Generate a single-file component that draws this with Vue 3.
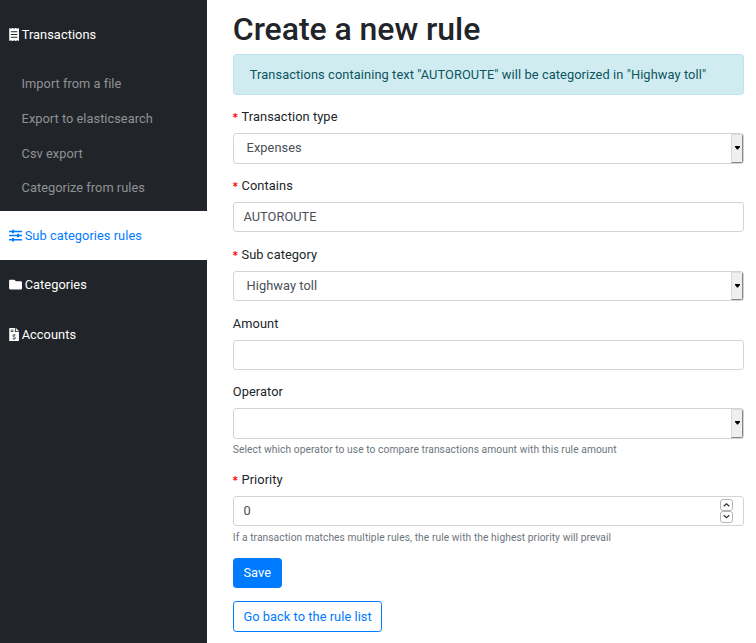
<script setup>
import { ref, computed } from 'vue'

const imports = ['Import from a file', 'Export to elasticsearch', 'Csv export', 'Categorize from rules']
const text = ref('AUTOROUTE')
const subCategory = ref('Highway toll')
const summary = computed(
  () => `Transactions containing text "${text.value}" will be categorized in "${subCategory.value}"`
)
const fields = computed(() => [
  { label: 'Transaction type', required: true, kind: 'select', value: 'Expenses' },
  { label: 'Contains', required: true, kind: 'text', value: text.value },
  { label: 'Sub category', required: true, kind: 'select', value: subCategory.value },
  { label: 'Amount', kind: 'text', value: '' },
  {
    label: 'Operator',
    kind: 'select',
    value: '',
    help: 'Select which operator to use to compare transactions amount with this rule amount',
  },
  {
    label: 'Priority',
    required: true,
    kind: 'number',
    value: '0',
    help: 'If a transaction matches multiple rules, the rule with the highest priority will prevail',
  },
])
</script>

<template>
  <div class="page">
    <nav class="sidebar">
      <a class="item">
        <svg class="icon narrow" viewBox="0 0 384 512">
          <path fill="currentColor" fill-rule="evenodd" d="M358 6 320 32 265 3q-9-6-18 0L192 32 137 3q-9-6-18 0L64 32 26 6Q0-6 0 16v480q0 22 26 10l38-26 55 29q9 6 18 0l55-29 55 29q9 6 18 0l55-29 38 26q26 12 26-10V16q0-22-26-10zM64 128h256v36H64zm0 110h256v36H64zm0 110h256v36H64z" />
        </svg>
        <span>Transactions</span>
      </a>
      <div class="sub">
        <a v-for="name in imports" :key="name" class="sub-item">{{ name }}</a>
      </div>
      <a class="item active">
        <svg class="icon wide" viewBox="0 0 13 13">
          <path fill="currentColor" d="M0 1.7h3v-1h2v1h8v1.5H5v1H3v-1H0zM0 5.8h8v-1h2v1h3v1.5h-3v1H8v-1H0zM0 9.9h3v-1h2v1h8v1.5H5v1H3v-1H0z" />
        </svg>
        <span>Sub categories rules</span>
      </a>
      <a class="item">
        <svg class="icon wide" viewBox="0 0 512 512">
          <path fill="currentColor" d="M464 128H272l-64-64H48C21 64 0 85 0 112v288c0 27 21 48 48 48h416c27 0 48-21 48-48V176c0-27-21-48-48-48z" />
        </svg>
        <span>Categories</span>
      </a>
      <a class="item">
        <svg class="icon narrow" viewBox="0 0 384 512">
          <path fill="currentColor" fill-rule="evenodd" d="M24 0h200v136q0 24 24 24h136v328q0 24-24 24H24q-24 0-24-24V24Q0 0 24 0zm32 64v32h112V64zm0 64v32h112v-32z" />
          <path fill="currentColor" d="M256 0h6l122 122v6H256z" />
          <path fill="none" stroke="#212529" stroke-width="32" d="M246 278h-72q-32 0-32 30t34 34l34 12q34 8 34 38t-34 32h-74M192 244v34m0 146v34" />
        </svg>
        <span>Accounts</span>
      </a>
    </nav>

    <main class="content">
      <h1>Create a new rule</h1>
      <div class="alert">{{ summary }}</div>
      <div v-for="f in fields" :key="f.label" class="group">
        <label><span v-if="f.required" class="star">*</span>{{ f.label }}</label>
        <div class="control" :class="f.kind">
          <span class="value">{{ f.value }}</span>
          <span v-if="f.kind === 'select'" class="drop">
            <svg viewBox="0 0 5 4"><path d="M0 0h5v1L3 3.5H2L0 1z" /></svg>
          </span>
          <span v-if="f.kind === 'number'" class="spin">
            <svg viewBox="0 0 13 12"><rect x=".5" y=".5" width="12" height="11" rx="2.5" /><path d="M3.7 7.3 6.5 4.7l2.8 2.6" /></svg>
            <svg viewBox="0 0 13 12"><rect x=".5" y=".5" width="12" height="11" rx="2.5" /><path d="M3.7 4.2 6.5 6.8l2.8-2.6" /></svg>
          </span>
        </div>
        <small v-if="f.help">{{ f.help }}</small>
      </div>
      <button class="btn primary">Save</button>
      <button class="btn outline">Go back to the rule list</button>
    </main>
  </div>
</template>

<style>
body {
  background: #fff;
}
</style>

<style scoped>
.page,
.page * {
  box-sizing: border-box;
}
.page {
  display: flex;
  height: 643px;
  overflow: hidden;
  font: 12.8px/1.5 Roboto, sans-serif;
  letter-spacing: 0.06px;
  color: #212529;
}
.sidebar {
  flex: none;
  width: 207px;
  padding-top: 9.6px;
  background: #212529;
}
.item {
  display: flex;
  align-items: center;
  height: 49.6px;
  padding-left: 8.5px;
  gap: 3px;
  color: #fff;
}
.item.active {
  height: 49px;
  background: #fff;
  color: #007bff;
}
.icon {
  flex: none;
  height: 13px;
}
.narrow {
  width: 10.2px;
}
.wide {
  width: 13.2px;
}
.sub {
  height: 151.8px;
  padding: 7.2px 0 0 21.6px;
  letter-spacing: 0.03px;
}
.sub-item {
  display: flex;
  align-items: center;
  height: 34.7px;
  color: #909294;
}
.content {
  display: flex;
  flex-direction: column;
  align-items: stretch;
  width: 511.4px;
  margin-left: 25.8px;
  padding-top: 10px;
}
.content > * {
  flex-shrink: 0;
}
h1 {
  margin: 0 0 5.8px;
  font-size: 32px;
  line-height: 1.2;
  font-weight: 500;
  letter-spacing: -0.05px;
}
.alert {
  margin-bottom: 12.7px;
  padding: 9.6px 16px;
  border: 1px solid #bee5eb;
  border-radius: 3.2px;
  background: #d1ecf1;
  color: #0c5460;
  letter-spacing: 0.1px;
}
.group {
  margin-bottom: 12.4px;
}
label {
  display: block;
  height: 19.2px;
  margin-bottom: 6.8px;
  letter-spacing: 0.09px;
}
.star {
  display: inline-block;
  width: 8.7px;
  line-height: 1;
  color: #f00;
  font-family: "DejaVu Sans", sans-serif;
  font-size: 9.6px;
  font-weight: bold;
}
.control {
  display: flex;
  justify-content: space-between;
  height: 30.4px;
  padding-left: 9.6px;
  border: 1px solid #ced4da;
  border-radius: 3.2px;
  color: #495057;
  overflow: hidden;
}
.select {
  padding-left: 12.8px;
}
.value {
  line-height: 27.8px;
}
.drop {
  display: flex;
  align-items: center;
  justify-content: center;
  width: 12px;
  border: 1px solid #dcdcdc;
  border-right-color: #858585;
  border-bottom-color: #858585;
  background: #f0efed;
}
.drop svg {
  width: 5px;
  height: 4px;
}
.spin {
  display: flex;
  flex-direction: column;
  justify-content: center;
  padding-right: 10.2px;
}
.spin svg {
  width: 13px;
  height: 12px;
  fill: #fff;
  stroke: #b5b5b5;
}
.spin path {
  fill: none;
  stroke: #333;
  stroke-width: 1.2;
}
small {
  display: block;
  margin-top: 3.4px;
  font-size: 10.24px;
  letter-spacing: 0.07px;
  color: #6c757d;
}
.btn {
  align-self: flex-start;
  height: 30.4px;
  margin: 0.4px 0 12.8px;
  padding: 0 9.6px;
  border: 1px solid #007bff;
  border-radius: 3.2px;
  font: inherit;
  letter-spacing: inherit;
}
.primary {
  background: #007bff;
  color: #fff;
}
.outline {
  height: 31px;
  background: #fff;
  color: #007bff;
}
</style>
